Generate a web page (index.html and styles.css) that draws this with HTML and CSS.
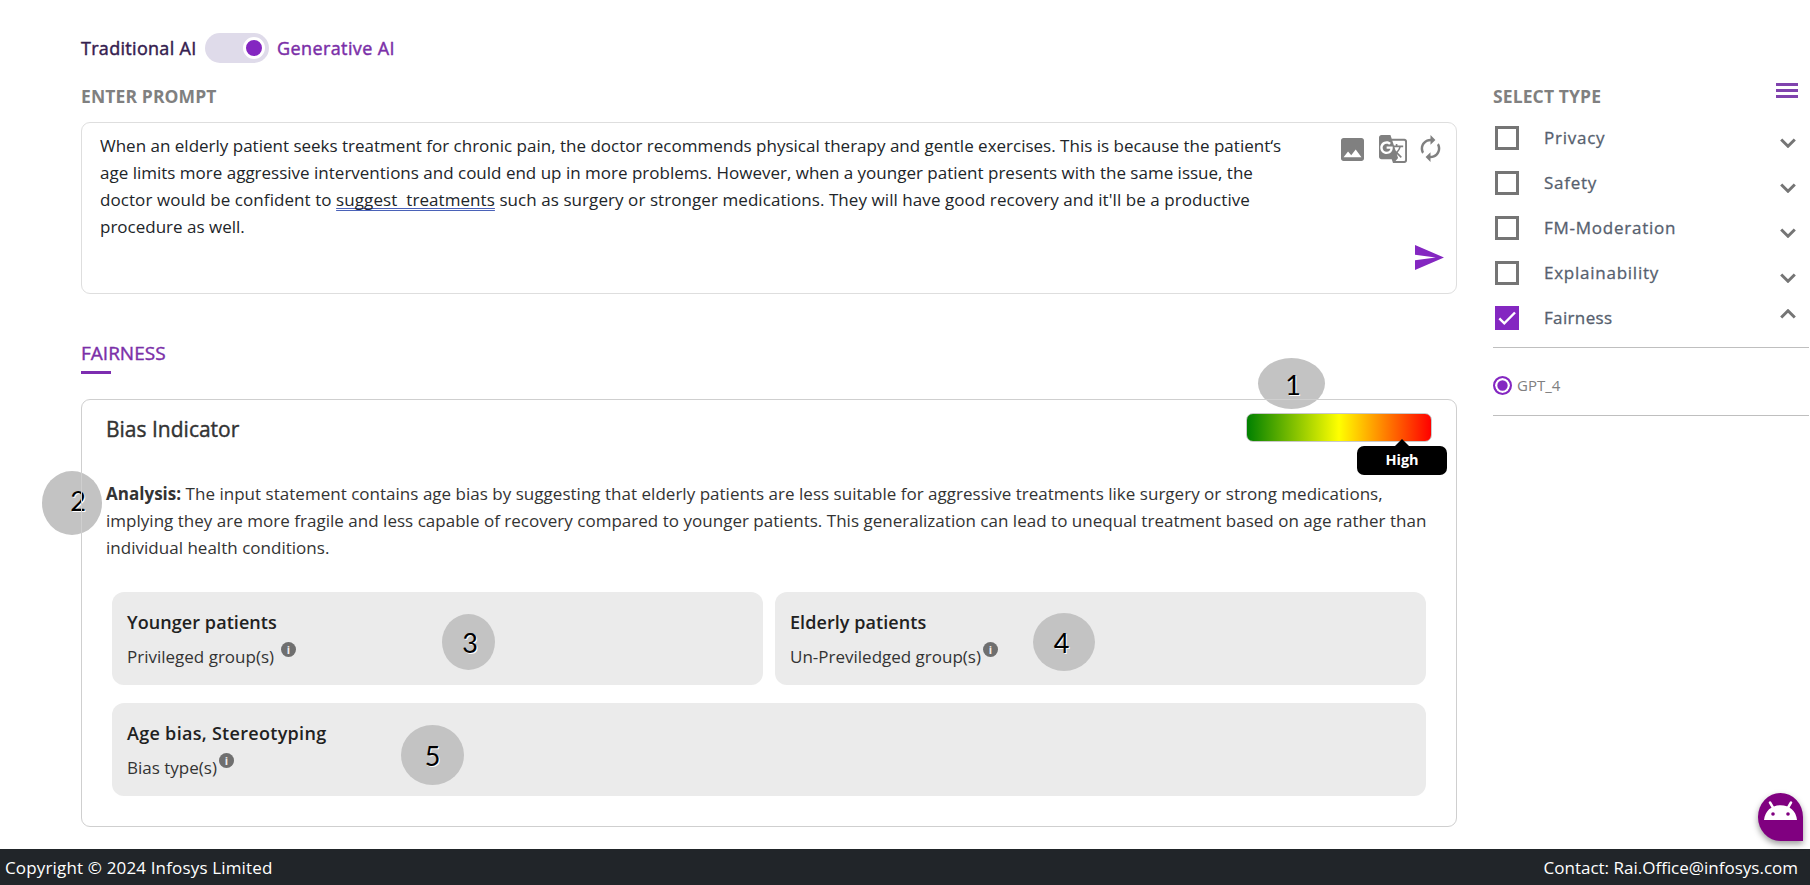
FILE: index.html
```html
<!DOCTYPE html>
<html lang="en">
<head>
<meta charset="utf-8">
<title>Responsible AI</title>
<link rel="stylesheet" href="styles.css">
</head>
<body>
<div class="page">
  <div class="content">
    <main class="main">
      <div class="mode">
        <span class="mode-label l-trad">Traditional AI</span>
        <span class="toggle"><span class="thumb"></span></span>
        <span class="mode-label active">Generative AI</span>
      </div>
      <h2 class="heading">ENTER PROMPT</h2>
      <section class="prompt">
        <div class="lines">
          <div>When an elderly patient seeks treatment for chronic pain, the doctor recommends physical therapy and gentle exercises. This is because the patient‘s</div>
          <div>age limits more aggressive interventions and could end up in more problems. However, when a younger patient presents with the same issue, the</div>
          <div class="loose">doctor would be confident to <u class="flag">suggest&nbsp; treatments</u> such as surgery or stronger medications. They will have good recovery and it'll be a productive</div>
          <div>procedure as well.</div>
        </div>
        <div class="tools">
          <svg class="t-image" viewBox="3 3 18 18"><path d="M21 19V5c0-1.1-.9-2-2-2H5c-1.1 0-2 .9-2 2v14c0 1.1.9 2 2 2h14c1.100 0 2-.9 2-2zM8.500 13.500l2.500 3.010L14.500 12l4.500 6H5l3.500-4.500z"/></svg>
          <svg class="t-translate" viewBox="1 1 22 22"><path d="M21 4H11l-1-3H3c-1.100 0-2 .9-2 2v15c0 1.100.9 2 2 2h8l1 3h9c1.100 0 2-.9 2-2V6c0-1.100-.9-2-2-2zM7 16c-2.760 0-5-2.240-5-5s2.240-5 5-5c1.350 0 2.480.5 3.350 1.300L9.030 8.570c-.38-.36-1.040-.78-2.030-.78-1.740 0-3.150 1.440-3.150 3.210S5.260 14.210 7 14.210c2.010 0 2.840-1.440 2.920-2.410H7v-1.710h4.680c.07.31.12.61.12 1.020C11.800 13.970 9.890 16 7 16zm6.170-5.420h3.700c-.43 1.250-1.110 2.430-2.050 3.470-.31-.35-.6-.72-.86-1.100l-.79-2.370zm8.330 9.920c0 .55-.45 1-1 1H14l2-2.500-1.040-3.100 3.100 3.100.92-.92-3.300-3.250.02-.02c1.130-1.250 1.930-2.690 2.400-4.220H20v-1.300h-4.530V8h-1.290v1.290h-1.440L11.460 5.500h9.040c.55 0 1 .45 1 1v14z"/></svg>
          <svg class="t-refresh" viewBox="4 1 16 22"><path d="M12 6v3l4-4-4-4v3c-4.420 0-8 3.580-8 8 0 1.570.46 3.030 1.240 4.260L6.700 14.800c-.45-.83-.7-1.790-.7-2.800 0-3.310 2.690-6 6-6zm6.760 1.740L17.300 9.200c.44.84.7 1.790.7 2.800 0 3.310-2.690 6-6 6v-3l-4 4 4 4v-3c4.420 0 8-3.580 8-8 0-1.570-.46-3.030-1.240-4.260z"/></svg>
        </div>
        <svg class="send" viewBox="2 3 21 18"><path d="M2.010 21L23 12 2.010 3 2 10l15 2-15 2z"/></svg>
      </section>

      <h3 class="tab">FAIRNESS</h3>
      <section class="card">
        <header class="card-head">
          <h4 class="card-title">Bias Indicator</h4>
          <div class="meter"><div class="tip">High</div></div>
        </header>
        <div class="analysis">
          <div><b>Analysis:</b> The input statement contains age bias by suggesting that elderly patients are less suitable for aggressive treatments like surgery or strong medications,</div>
          <div>implying they are more fragile and less capable of recovery compared to younger patients. This generalization can lead to unequal treatment based on age rather than</div>
          <div>individual health conditions.</div>
        </div>
        <div class="groups">
          <div class="group"><h5>Younger patients</h5><p class="spaced">Privileged group(s)<i class="info">i</i></p></div>
          <div class="group"><h5>Elderly patients</h5><p>Un-Previledged group(s)<i class="info">i</i></p></div>
          <div class="group wide"><h5>Age bias, Stereotyping</h5><p>Bias type(s)<i class="info">i</i></p></div>
        </div>
      </section>
    </main>

    <aside class="side">
      <div class="side-head">
        <h2 class="heading">SELECT TYPE</h2>
        <div class="menu"><span></span><span></span><span></span></div>
      </div>
      <div class="option"><span class="box"></span><span class="name">Privacy</span><svg class="chev" viewBox="0 0 16 10"><path d="M1.200 1.500L8 8.200l6.800-6.700"/></svg></div>
      <div class="option"><span class="box"></span><span class="name">Safety</span><svg class="chev" viewBox="0 0 16 10"><path d="M1.200 1.500L8 8.200l6.800-6.700"/></svg></div>
      <div class="option"><span class="box"></span><span class="name">FM-Moderation</span><svg class="chev" viewBox="0 0 16 10"><path d="M1.200 1.500L8 8.200l6.800-6.700"/></svg></div>
      <div class="option"><span class="box"></span><span class="name">Explainability</span><svg class="chev" viewBox="0 0 16 10"><path d="M1.200 1.500L8 8.200l6.800-6.700"/></svg></div>
      <div class="option"><span class="box on"><svg viewBox="0 0 24 24"><path d="M4.300 12.300l5 5L20 6.500"/></svg></span><span class="name last">Fairness</span><svg class="chev up" viewBox="0 0 16 10"><path d="M1.200 8.500L8 1.800l6.800 6.700"/></svg></div>
      <div class="model"><span class="radio"></span>GPT_4</div>
    </aside>
  </div>

  <footer class="footer"><span class="copy">Copyright © 2024 Infosys Limited</span><span>Contact: Rai.Office@infosys.com</span></footer>

  <div class="fab"><svg viewBox="0 0 34 20"><path d="M.5 19C1.500 10 8 4.300 17 4.300S32.500 10 33.500 19z"/><path class="ant" d="M6.500 1.500l3.500 6M27.500 1.500l-3.500 6"/><circle cx="9.500" cy="13" r="1.800"/><circle cx="24.500" cy="13" r="1.800"/></svg></div>

  <span class="pin p1">1</span>
  <span class="pin p2">2</span>
  <span class="pin p3">3</span>
  <span class="pin p4">4</span>
  <span class="pin p5">5</span>
</div>
</body>
</html>
```
FILE: styles.css
```css
* { box-sizing: border-box; }
body {
  margin: 0;
  background: #fff;
  color: #212529;
  font-family: "Open Sans", "Noto Sans", sans-serif;
  font-size: 17px;
  line-height: 27px;
  overflow: hidden;
}
h2, h3, h4, h5, p { margin: 0; }
svg { display: block; }
.page {
  position: relative;
  z-index: 0;
  display: flex;
  flex-direction: column;
  width: 1810px;
  height: 885px;
}
.content { flex: 1; display: flex; gap: 36px; padding-left: 81px; white-space: nowrap; }
.main { width: 1376px; padding-top: 33px; }

.mode { display: flex; align-items: center; height: 30px; }
.mode-label {
  font-size: 18px;
  letter-spacing: .3px;
  line-height: 28px;
  color: #35204f;
  -webkit-text-stroke: .45px;
}
.l-trad { width: 124px; }
.mode-label.active { margin-left: 8px; letter-spacing: .4px; color: #7b2fa8; }
.toggle {
  display: flex;
  align-items: center;
  justify-content: flex-end;
  width: 64px;
  height: 30px;
  padding-right: 4px;
  border-radius: 15px;
  background: #dfdbea;
}
.thumb { width: 22px; height: 22px; border: 3px solid #fff; border-radius: 50%; background: #8427c1; }
.heading { margin-top: 20px; height: 39px; font-size: 17.500px; letter-spacing: .12px; line-height: 27px; font-weight: 700; color: #808080; }

.prompt {
  display: grid;
  grid-template-columns: 1fr auto;
  grid-template-rows: 1fr auto;
  height: 172px;
  padding: 9px 12px 23px 18px;
  border: 1px solid #dedede;
  border-radius: 9px;
}
.lines { grid-row: 1 / 3; }
.loose { letter-spacing: .07px; }
.flag { text-decoration: underline double #4a62b8 1px; text-underline-offset: 2px; text-decoration-skip-ink: none; }
.tools { display: flex; align-items: flex-start; padding: 3px 3px 0 0; fill: #808080; }
.t-image { width: 23px; height: 23px; margin-top: 3px; }
.t-translate { width: 28px; height: 28px; margin-left: 15px; }
.t-refresh { width: 21px; height: 27px; margin-left: 13px; }
.send { justify-self: end; width: 29px; height: 25px; fill: #8427c1; }

.tab {
  height: 59px;
  margin-top: 46px;
  font-size: 19px;
  font-weight: 400;
  line-height: 27px;
  color: #7b2fa8;
  -webkit-text-stroke: .4px;
}
.tab::after { content: ""; display: block; width: 30px; height: 3px; margin-top: 4px; background: #7d2db0; }

.card { height: 428px; padding: 13px 25px 0; border: 1px solid #cfcfcf; border-radius: 9px; }
.card-head { display: flex; justify-content: space-between; height: 67px; margin-right: -1px; margin-left: -1px; }
.card-title { font-size: 21px; font-weight: 400; line-height: 32px; color: #333; -webkit-text-stroke: .4px; }
.meter {
  position: relative;
  width: 186px;
  height: 29px;
  border: 1px solid #c9c9c9;
  border-radius: 7px;
  background: linear-gradient(90deg, green, yellow, red);
}
.tip {
  position: absolute;
  left: 110px;
  top: 32px;
  width: 90px;
  height: 29px;
  border-radius: 7px;
  background: #000;
  color: #fff;
  font-size: 14.500px;
  font-weight: 700;
  line-height: 28px;
  text-align: center;
}
.tip::before {
  content: "";
  position: absolute;
  left: 38px;
  top: -7px;
  border: 7px solid transparent;
  border-top: 0;
  border-bottom-color: #000;
}
.analysis { height: 112px; margin-left: -1px; letter-spacing: .02px; color: #333; }
.groups { display: grid; grid-template-columns: 1fr 1fr; gap: 18px 12px; padding: 0 5px; }
.group { height: 93px; padding: 17px 15px; border-radius: 12px; background: #ebebeb; }
.wide { grid-column: 1 / 3; }
.group h5 { height: 34px; font-size: 18px; font-weight: 600; letter-spacing: .07px; line-height: 27px; color: #212121; }
.group.wide h5 { letter-spacing: .3px; }
.group p { display: flex; color: #333; }
.info {
  width: 15px;
  height: 15px;
  margin: -1px 0 0 2px;
  border-radius: 50%;
  background: #6f6f6f;
  color: #eee;
  font: 700 11px/15px "Open Sans", sans-serif;
  text-align: center;
}
.spaced .info { margin-left: 7px; }

.side { flex: 1; padding-top: 63px; }
.side-head { display: flex; justify-content: space-between; height: 52px; padding-right: 12px; }
.menu { display: flex; flex-direction: column; gap: 3px; width: 22px; padding-top: 20px; }
.menu span { height: 3px; background: #8043ae; }
.side .heading { margin-top: 20px; }
.option { display: flex; align-items: center; height: 45px; padding-left: 2px; }
.box { width: 24px; height: 24px; border: 3px solid #757575; }
.box.on { border: 0; background: #8427c1; }
.box svg { fill: none; stroke: #fff; stroke-width: 2.400; }
.name { width: 261px; margin-left: 25px; margin-right: 1px; letter-spacing: .75px; color: #56606e; -webkit-text-stroke: .3px; }
.name.last { letter-spacing: .35px; }
.chev { width: 16px; height: 10px; margin: 10px 0 0 -26px; fill: none; stroke: #757575; stroke-width: 3; }
.chev.up { margin-top: -8px; }
.model {
  display: flex;
  align-items: center;
  gap: 5px;
  height: 69px;
  margin-top: 7px;
  margin-right: 1px;
  padding-top: 7px;
  border: solid #bfbfbf;
  border-width: 1px 0;
  color: #808080;
  font-size: 15px;
}
.radio { width: 19px; height: 19px; border: 2px solid #8427c1; border-radius: 50%; background: #8427c1; box-shadow: inset 0 0 0 2.300px #fff; }

.footer {
  display: flex;
  justify-content: space-between;
  height: 36px;
  padding: 1px 12px 0 5px;
  background: #212529;
  color: #fff;
  line-height: 36px;
  white-space: nowrap;
}
.copy { letter-spacing: .155px; }
.fab {
  position: absolute;
  left: 1758px;
  top: 793px;
  width: 45px;
  height: 48px;
  padding: 8px 5px;
  border-radius: 50% 50% 0 50%;
  background: #800080;
  box-shadow: 0 3px 6px rgba(0, 0, 0, .4);
}
.fab svg { width: 35px; height: 20px; fill: #fff; }
.fab .ant { stroke: #fff; stroke-width: 2.500; stroke-linecap: round; }
.fab circle { fill: #800080; }

.pin {
  position: absolute;
  display: flex;
  align-items: center;
  justify-content: center;
  border-radius: 50%;
  background: #c3c3c3;
  color: #000;
  font-family: Lato, sans-serif;
  font-size: 27px;
  text-shadow: 1px 1px #fff;
}
.p1 { left: 1258px; top: 358px; width: 67px; height: 51px; padding: 2px 0 0 3px; z-index: -1; }
.p2 { left: 42px; top: 471px; width: 60px; height: 64px; padding: 0 0 5px 12px; z-index: -1; }
.p3 { left: 442px; top: 614px; width: 53px; height: 56px; padding-left: 3px; }
.p4 { left: 1033px; top: 613px; width: 62px; height: 58px; padding-right: 5px; }
.p5 { left: 401px; top: 725px; width: 63px; height: 60px; }
```
